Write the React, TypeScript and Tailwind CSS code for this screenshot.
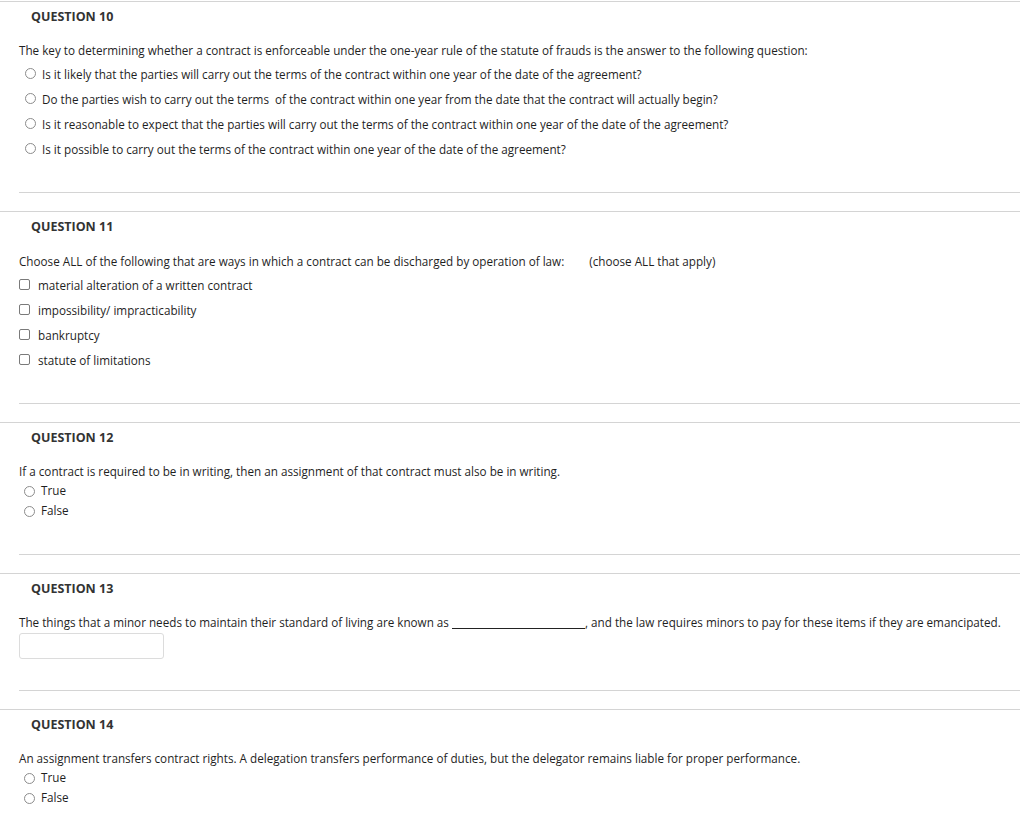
import React from "react";

const Radio = () => (
  <span className="inline-block w-[11px] h-[11px] rounded-full border border-[#8c8c8c] bg-white shrink-0" />
);

const Check = () => (
  <span className="inline-block w-[11px] h-[11px] rounded-[2px] border border-[#7a7a7a] bg-white shrink-0" />
);

function Section({
  num,
  children,
  pb,
  last,
}: {
  num: number;
  children: React.ReactNode;
  pb: string;
  last?: boolean;
}) {
  return (
    <div className="border-t border-[#d4d4d4]">
      <div className="pl-[31px] pt-[5px] h-[25px] leading-[20px] text-[12.5px] font-bold text-[#333]">
        QUESTION {num}
      </div>
      <div className={"pl-[19px] " + pb}>{children}</div>
      {!last && <div className="ml-[19px] border-t border-[#d4d4d4] mb-[18px]" />}
    </div>
  );
}

export default function App() {
  return (
    <div
      className="w-[1020px] min-h-[820px] bg-white pt-[1px] text-[11.7px] text-[#1f1f1f] overflow-hidden"
      style={{ fontFamily: '"Open Sans", "Noto Sans", sans-serif' }}
    >
      <Section num={10} pb="pb-[31px]">
        <div className="mt-[15px] leading-[16px]">
          The key to determining whether a contract is enforceable under the one-year rule of the statute of frauds is the answer to the following question:
        </div>
        <div className="mt-[3px]">
          {[
            "Is it likely that the parties will carry out the terms of the contract within one year of the date of the agreement?",
            "Do the parties wish to carry out the terms\u00a0 of the contract within one year from the date that the contract will actually begin?",
            "Is it reasonable to expect that the parties will carry out the terms of the contract within one year of the date of the agreement?",
            "Is it possible to carry out the terms of the contract within one year of the date of the agreement?",
          ].map((t) => (
            <div key={t} className="h-[25px] flex items-center pl-[6px] gap-[6px]">
              <Radio />
              <span className="leading-[16px]">{t}</span>
            </div>
          ))}
        </div>
      </Section>

      <Section num={11} pb="pb-[31px]">
        <div className="mt-[16px] leading-[16px]">
          Choose ALL of the following that are ways in which a contract can be discharged by operation of law:
          <span className="ml-[25px]">(choose ALL that apply)</span>
        </div>
        <div className="mt-[3px]">
          {[
            "material alteration of a written contract",
            "impossibility/ impracticability",
            "bankruptcy",
            "statute of limitations",
          ].map((t) => (
            <div key={t} className="h-[25px] flex items-center gap-[8px]">
              <Check />
              <span className="leading-[16px]">{t}</span>
            </div>
          ))}
        </div>
      </Section>

      <Section num={12} pb="pb-[34px]">
        <div className="mt-[15px] leading-[16px]">
          If a contract is required to be in writing, then an assignment of that contract must also be in writing.
        </div>
        <div className="mt-[1px]">
          {["True", "False"].map((t) => (
            <div key={t} className="h-[20px] flex items-center pl-[5px] gap-[6px]">
              <span className="mt-[2px] flex">
                <Radio />
              </span>
              <span className="leading-[16px]">{t}</span>
            </div>
          ))}
        </div>
      </Section>

      <Section num={13} pb="pb-[31px]">
        <div className="mt-[15px] leading-[16px]">
          The things that a minor needs to maintain their standard of living are known as{" "}
          <span className="inline-block w-[133px] border-b border-[#222] align-[-2px]" />, and the law requires minors to pay for these items if they are emancipated.
        </div>
        <div className="mt-[3px] w-[145px] h-[26px] border border-[#dcdcdc] rounded-[3px] bg-white" />
      </Section>

      <Section num={14} pb="pb-[20px]" last>
        <div className="mt-[15px] leading-[16px]">
          An assignment transfers contract rights. A delegation transfers performance of duties, but the delegator remains liable for proper performance.
        </div>
        <div className="mt-[1px]">
          {["True", "False"].map((t) => (
            <div key={t} className="h-[20px] flex items-center pl-[5px] gap-[6px]">
              <span className="mt-[2px] flex">
                <Radio />
              </span>
              <span className="leading-[16px]">{t}</span>
            </div>
          ))}
        </div>
      </Section>
    </div>
  );
}
